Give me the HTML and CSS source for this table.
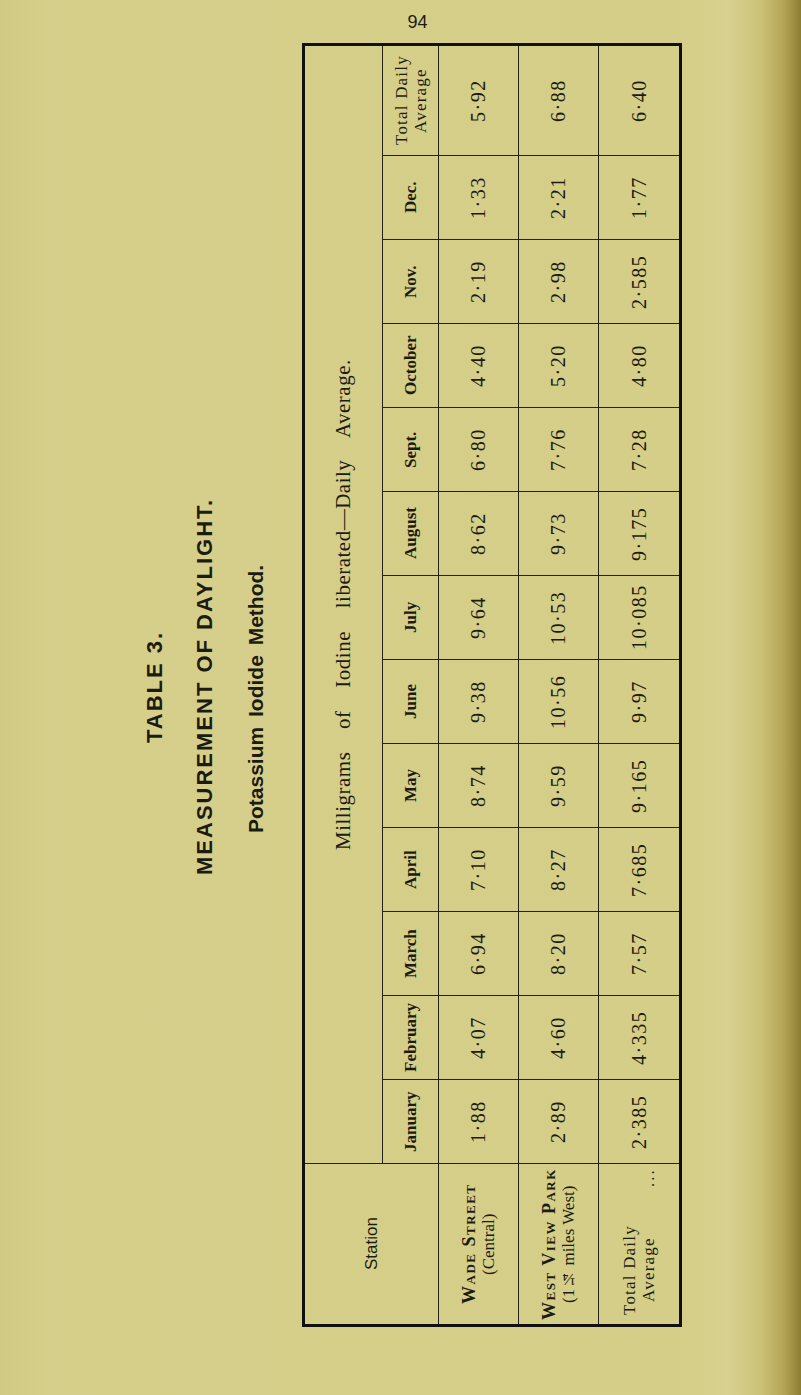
FILE: index.html
```html
<!DOCTYPE html>
<html lang="en">
<head>
<meta charset="utf-8">
<title>Table 3 — Measurement of Daylight</title>
<link rel="stylesheet" href="styles.css">
</head>
<body>
<div class="page">
  <div class="folio">94</div>
  <section class="landscape">
    <h1 class="t-num">TABLE 3.</h1>
    <h2 class="t-main">MEASUREMENT OF DAYLIGHT.</h2>
    <h3 class="t-sub">Potassium Iodide Method.</h3>
    <table class="data">
      <colgroup>
        <col class="c-station">
        <col class="c-month"><col class="c-month"><col class="c-month"><col class="c-month">
        <col class="c-month"><col class="c-month"><col class="c-month"><col class="c-month">
        <col class="c-month"><col class="c-month"><col class="c-month"><col class="c-month">
        <col class="c-total">
      </colgroup>
      <thead>
        <tr class="r-title">
          <th rowspan="2" class="station">Station</th>
          <th colspan="13" class="caption">Milligrams of Iodine liberated—Daily Average.</th>
        </tr>
        <tr class="r-month">
          <th class="month">January</th>
          <th class="month">February</th>
          <th class="month">March</th>
          <th class="month">April</th>
          <th class="month">May</th>
          <th class="month">June</th>
          <th class="month">July</th>
          <th class="month">August</th>
          <th class="month">Sept.</th>
          <th class="month">October</th>
          <th class="month">Nov.</th>
          <th class="month">Dec.</th>
          <th class="tot-h">Total Daily<br>Average</th>
        </tr>
      </thead>
      <tbody>
        <tr class="r-val r-wade">
          <th class="stn"><span class="sc">Wade Street</span><br>(Central)</th>
          <td>1·88</td><td>4·07</td><td>6·94</td><td>7·10</td><td>8·74</td><td>9·38</td>
          <td>9·64</td><td>8·62</td><td>6·80</td><td>4·40</td><td>2·19</td><td>1·33</td><td>5·92</td>
        </tr>
        <tr class="r-val r-west">
          <th class="stn"><span class="sc">West View Park</span><br>(1¼ miles West)</th>
          <td>2·89</td><td>4·60</td><td>8·20</td><td>8·27</td><td>9·59</td><td>10·56</td>
          <td>10·53</td><td>9·73</td><td>7·76</td><td>5·20</td><td>2·98</td><td>2·21</td><td>6·88</td>
        </tr>
        <tr class="r-val r-total">
          <th class="stn tot">
            <div class="tot-wrap"><span class="tot-lbl">Total Daily<br>Average</span><span class="dots">...</span></div>
          </th>
          <td>2·385</td><td>4·335</td><td>7·57</td><td>7·685</td><td>9·165</td><td>9·97</td>
          <td>10·085</td><td>9·175</td><td>7·28</td><td>4·80</td><td>2·585</td><td>1·77</td><td>6·40</td>
        </tr>
      </tbody>
    </table>
  </section>
</div>
</body>
</html>
```
FILE: styles.css
```css
* { box-sizing: border-box; }
html, body { margin: 0; padding: 0; }
body {
  background: #d5ce88;
  color: #1c1b12;
  font-family: "Liberation Serif", serif;
}
.page {
  min-height: 1395px;
  background: linear-gradient(to right,
    #d1ca84 0%, #d6cf8b 6%, #d5ce88 85%, #d8d18f 91%,
    #cbc277 95%, #b1a352 98%, #8c7c32 100%);
  overflow: hidden;
}
.folio {
  height: 46px;
  padding: 12px 0 14px 34px;
  text-align: center;
  font-family: "Liberation Sans", sans-serif;
  font-size: 18px;
  line-height: 20px;
}

/* the table is printed sideways: reads bottom-to-top */
.landscape {
  writing-mode: vertical-rl;
  transform: rotate(180deg);
  inline-size: 1281px;
  padding-block-start: 142px;
}
.t-num, .t-main, .t-sub {
  margin: 0;
  font-family: "Liberation Sans", sans-serif;
  font-weight: bold;
  text-align: center;
  line-height: 26px;
}
.t-num { font-size: 22px; letter-spacing: 2px; }
.t-main { font-size: 22px; letter-spacing: 2px; margin-block-start: 24px; }
.t-sub { font-size: 21px; word-spacing: 4px; margin-block-start: 25px; padding-inline-end: 24px; }

.data {
  margin-block-start: 33px;
  inline-size: 1281px;
  border-collapse: collapse;
  table-layout: fixed;
  border: 3px solid #111;
}
.data th, .data td {
  border: 1px solid #23221a;
  padding: 0;
  text-align: center;
  vertical-align: middle;
  font-weight: normal;
}
.c-station { inline-size: 162px; }
.c-month { inline-size: 84px; }
.c-total { inline-size: 111px; }

.r-title { block-size: 79px; }
.r-month { block-size: 56px; }
.r-wade, .r-west { block-size: 80px; }
.r-total { block-size: 82px; }

.caption {
  font-size: 21px;
  letter-spacing: 0.5px;
  word-spacing: 17px;
}
.station {
  font-family: "Liberation Sans", sans-serif;
  font-size: 17px;
}
.month {
  font-size: 17px;
  font-weight: bold !important;
}
.tot-h {
  font-size: 17px;
  line-height: 19px;
  letter-spacing: 1.2px;
}
.data td {
  font-size: 20px;
  letter-spacing: 1.5px;
}
.stn {
  font-size: 17px;
  line-height: 19px;
}
.sc {
  font-size: 18px;
  font-variant: small-caps;
  font-weight: bold;
  letter-spacing: 1.5px;
}
.tot-wrap {
  display: flex;
  justify-content: space-between;
  align-items: flex-end;
  padding-inline: 9px 4px;
}
.tot-lbl {
  text-align: center;
  line-height: 19px;
  letter-spacing: 1.2px;
}
.dots {
  letter-spacing: 2px;
  line-height: 19px;
}
```
